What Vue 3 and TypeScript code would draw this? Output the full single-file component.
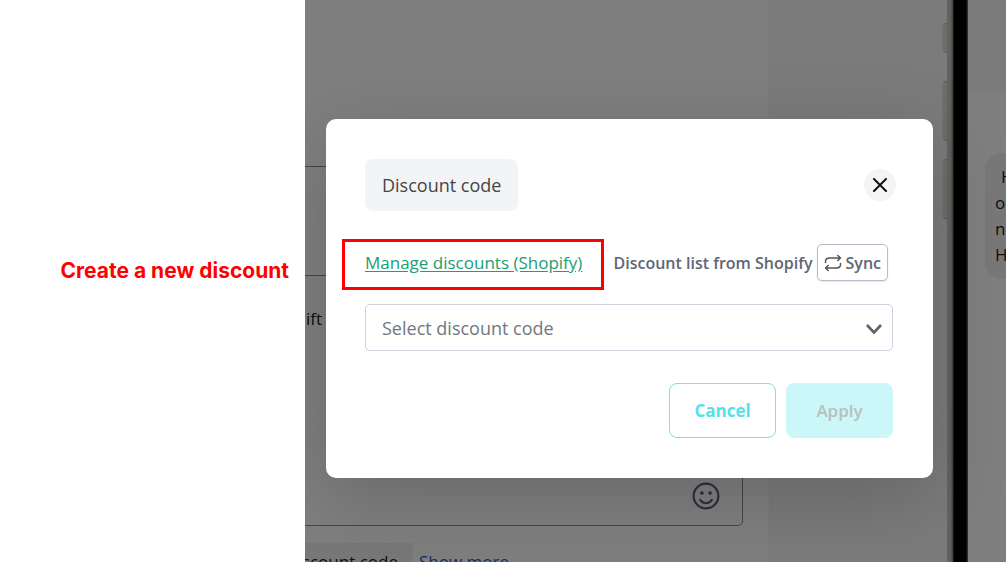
<script setup lang="ts">
import { ref } from 'vue'

const selected = ref('')
const bubbleLines: string[] = ['H', 'o', 'n', 'H']
</script>

<template>
  <main class="page">
    <aside class="caption">
      <p>Create a new discount</p>
    </aside>

    <section class="stage">
      <div class="backdrop">
        <div class="composer">
          <div class="block first"></div>
          <div class="block second">
            <span>ift</span>
            <svg class="smile" viewBox="0 0 26 26" aria-hidden="true">
              <circle cx="13" cy="13" r="11.500" fill="none" stroke="#5a607c" stroke-width="2" />
              <circle cx="9.200" cy="10.300" r="1.700" fill="#5a607c" />
              <circle cx="16.800" cy="10.300" r="1.700" fill="#5a607c" />
              <path d="M7.500 16.500c2.500 4.200 8.500 4.200 11 0" fill="none" stroke="#5a607c" stroke-width="1.800" stroke-linecap="round" />
            </svg>
          </div>
          <div class="more">
            <span class="tag">scount code</span>
            <a href="#">Show more</a>
          </div>
        </div>
        <div class="preview">
          <div class="keys">
            <i class="key short"></i>
            <i class="key"></i>
            <i class="key"></i>
          </div>
          <div class="frame"></div>
          <div class="screen">
            <div class="bar"></div>
            <div class="bubble">
              <span v-for="(line, i) in bubbleLines" :key="i" :class="{ indent: i === 0 }">{{ line }}</span>
            </div>
          </div>
        </div>
      </div>

      <div class="overlay">
        <div class="dialog" role="dialog" aria-labelledby="dialog-title">
          <header class="head">
            <h2 id="dialog-title">Discount code</h2>
            <button class="close" type="button" aria-label="Close">
              <svg viewBox="0 0 14 14" aria-hidden="true">
                <path d="M1 1l12 12M13 1L1 13" fill="none" stroke="#111" stroke-width="2" stroke-linecap="round" />
              </svg>
            </button>
          </header>

          <div class="manage">
            <div class="marked"><a href="#">Manage discounts (Shopify)</a></div>
            <div class="syncing">
              <span>Discount list from Shopify</span>
              <button class="sync" type="button">
                <svg viewBox="0 0 18 18" aria-hidden="true">
                  <path d="M1.500 8.500V7.500C1.500 5 3 4 5.500 4H16M13.800 1.500L16.500 4L13.800 6.500M16.500 9.500V10.500C16.500 13 15 14 12.500 14H2M4.200 11.500L1.500 14L4.200 16.500" fill="none" stroke="#555" stroke-width="1.500" stroke-linecap="round" stroke-linejoin="round" />
                </svg>
                Sync
              </button>
            </div>
          </div>

          <div class="picker">
            <select v-model="selected" aria-label="Select discount code">
              <option value="">Select discount code</option>
            </select>
            <svg viewBox="0 0 18 12" aria-hidden="true">
              <path d="M2 2l7 7.500L16 2" fill="none" stroke="#606368" stroke-width="2.600" />
            </svg>
          </div>

          <footer class="actions">
            <button class="cancel" type="button">Cancel</button>
            <button class="apply" type="button" disabled>Apply</button>
          </footer>
        </div>
      </div>
    </section>
  </main>
</template>

<style>
body {
  background: #fff;
}
</style>

<style scoped>
.page {
  display: grid;
  grid-template-columns: 305px 1fr;
  height: 100vh;
  overflow: hidden;
  font-family: "Open Sans", "Noto Sans", sans-serif;
  font-size: 17px;
  line-height: 26px;
}
.page * {
  box-sizing: border-box;
}
.caption {
  padding: 258px 16px 0 0;
  text-align: right;
}
.caption p {
  margin: 0;
  color: #f00;
  font-family: Inter, sans-serif;
  font-size: 21px;
  font-weight: 700;
  white-space: nowrap;
}
.stage {
  position: relative;
  overflow: hidden;
}
.backdrop {
  display: flex;
  height: 100%;
}
.composer {
  flex: 1;
  padding: 166px 26px 0 0;
  border-right: 1px solid #f0f0f0;
}
.block {
  border: 1px solid #8c8c8c;
  border-width: 1px 1px 0 0;
}
.first {
  height: 109px;
}
.second {
  display: flex;
  flex-direction: column;
  justify-content: space-between;
  height: 251px;
  padding: 30px 22px 15px 1px;
  border-bottom-width: 1px;
  border-radius: 0 0 5px 0;
  color: #222;
}
.smile {
  align-self: flex-end;
  width: 28px;
  height: 28px;
}
.more {
  display: flex;
  gap: 6px;
  margin-top: 17px;
}
.tag {
  display: flex;
  justify-content: flex-end;
  width: 108px;
  height: 52px;
  padding: 6px 15px 6px 0;
  background: #f1f1f1;
  color: #222;
  white-space: nowrap;
}
.more a {
  padding-top: 6px;
  color: #345bc0;
  text-decoration: none;
}
.preview {
  display: flex;
  width: 236px;
  background: #f7f7f7;
}
.keys {
  display: flex;
  flex-direction: column;
  align-items: flex-end;
  gap: 18px;
  width: 177px;
  padding-top: 23px;
}
.key {
  width: 3px;
  height: 60px;
  border: 1px solid #bbb7b2;
  border-width: 1px 0;
  border-radius: 2px 0 0 2px;
  background: #dedad6;
  box-shadow: -1px 0 2px rgba(0, 0, 0, 0.15);
}
.key.short {
  height: 30px;
  margin-bottom: 10px;
}
.frame {
  width: 21px;
  background: linear-gradient(to right, #c4c0ba 0, #d0ccc6 2px, #aaa69f 5px, #6c685f 6px, #000 7px, #000 19px, #777 21px);
}
.screen {
  flex: 1;
  overflow: hidden;
  background: #fff;
}
.bar {
  height: 92px;
  background: #f6f6f6;
}
.bubble {
  display: flex;
  flex-direction: column;
  width: 240px;
  margin: 61px 0 0 17px;
  padding: 11px 10px;
  border-radius: 16px;
  background: #f0f0f0;
  color: #222;
}
.bubble .indent {
  padding-left: 6px;
}
.overlay {
  position: absolute;
  inset: 0;
  padding: 119px 73px 0 21px;
  background: rgba(0, 0, 0, 0.5);
}
.dialog {
  padding: 40px 0;
  border-radius: 10px;
  background: #fff;
  box-shadow: 0 20px 80px rgba(0, 0, 0, 0.18);
}
.head {
  display: flex;
  align-items: center;
  justify-content: space-between;
  padding: 0 37px 0 39px;
}
.head h2 {
  margin: 0;
  padding: 13px 17px;
  border-radius: 8px;
  background: #f3f4f6;
  color: #444;
  font-size: 18px;
  font-weight: 400;
}
button {
  font: inherit;
  cursor: pointer;
}
.close {
  display: flex;
  align-items: center;
  justify-content: center;
  width: 32px;
  height: 32px;
  padding: 0;
  border: 0;
  border-radius: 50%;
  background: #f3f4f6;
}
.close svg {
  width: 14px;
  height: 14px;
}
.manage {
  display: flex;
  align-items: center;
  justify-content: space-between;
  padding: 33px 45px 23px 39px;
  white-space: nowrap;
}
.marked {
  position: relative;
}
.marked::after {
  content: "";
  position: absolute;
  inset: -11px -22px -14px -23px;
  border: 3px solid #f00;
  pointer-events: none;
}
.marked a {
  color: #20a070;
  text-underline-offset: 2px;
}
.syncing {
  display: flex;
  align-items: center;
  gap: 4px;
  color: #5c6675;
  font-size: 16px;
  font-weight: 600;
}
.sync {
  display: flex;
  align-items: center;
  gap: 4px;
  height: 37px;
  padding: 0 6px;
  border: 1px solid #b5bdc9;
  border-radius: 5px;
  background: #fff;
  box-shadow: 0 1px 2px rgba(0, 0, 0, 0.1);
  color: inherit;
}
.sync svg {
  width: 18px;
  height: 18px;
}
.picker {
  position: relative;
  margin: 0 40px 32px 39px;
}
.picker select {
  display: block;
  width: 100%;
  height: 47px;
  padding: 0 48px 0 16px;
  appearance: none;
  border: 1px solid #ccd1db;
  border-radius: 5px;
  background: #fff;
  color: #73777d;
  font: inherit;
  font-size: 18px;
}
.picker svg {
  position: absolute;
  top: 19px;
  right: 10px;
  width: 18px;
  height: 12px;
  pointer-events: none;
}
.actions {
  display: flex;
  justify-content: flex-end;
  gap: 10px;
  padding: 0 40px;
}
.actions button {
  width: 107px;
  height: 55px;
  padding: 0;
  border: 1px solid #6be8eb;
  border-radius: 8px;
  background: #fff;
  color: #52e3e8;
  font-weight: 700;
}
.actions .apply {
  border-color: #cbf7f8;
  background: #cbf7f8;
  color: #b8bfbf;
  font-weight: 600;
}
</style>
